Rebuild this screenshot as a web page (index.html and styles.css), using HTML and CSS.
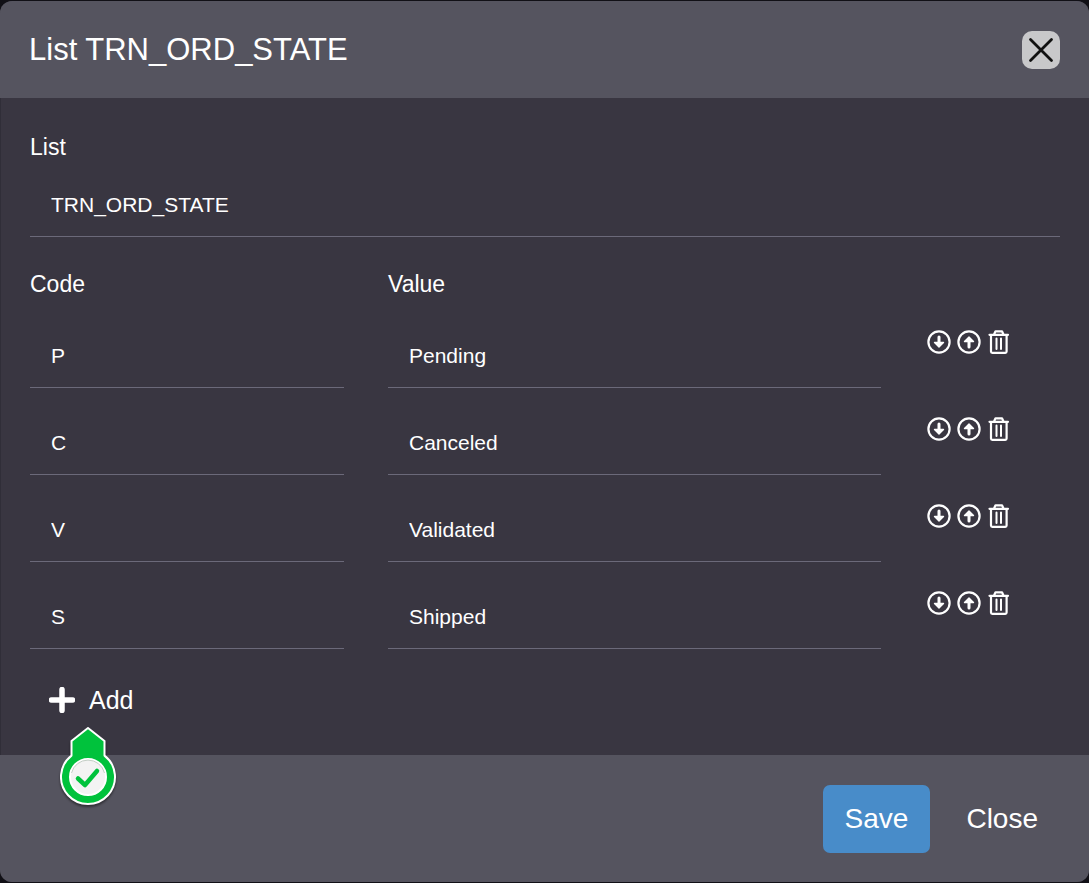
FILE: index.html
```html
<!DOCTYPE html>
<html lang="en">
<head>
<meta charset="utf-8">
<meta name="viewport" content="width=device-width, initial-scale=1">
<title>List TRN_ORD_STATE</title>
<link rel="stylesheet" href="styles.css">
</head>
<body>
<svg class="sprite" aria-hidden="true">
  <symbol id="down" viewBox="0 0 24 24">
    <circle cx="12" cy="12" r="10.6" fill="none" stroke="#fff" stroke-width="2.2"/>
    <path d="M12 7v7" fill="none" stroke="#fff" stroke-width="3" stroke-linecap="round"/>
    <path d="M7.500 12.500h9L12 17z" fill="#fff" stroke="#fff" stroke-width="1.400" stroke-linejoin="round"/>
  </symbol>
  <symbol id="up" viewBox="0 0 24 24">
    <circle cx="12" cy="12" r="10.6" fill="none" stroke="#fff" stroke-width="2.2"/>
    <path d="M12 17v-7" fill="none" stroke="#fff" stroke-width="3" stroke-linecap="round"/>
    <path d="M7.500 11.500h9L12 7z" fill="#fff" stroke="#fff" stroke-width="1.400" stroke-linejoin="round"/>
  </symbol>
  <symbol id="trash" viewBox="0 0 24 24">
    <g fill="none" stroke="#fff" stroke-width="2.200" stroke-linecap="round" stroke-linejoin="round">
      <path d="M2.500 4.800h18.500M7 4.500L8.500 1.300h6.500L16.500 4.500M4 5v16.500q0 1.300 1.300 1.300h13q1.300 0 1.300-1.300V5"/>
      <path d="M9.500 8.500v10.500M14 8.500v10.500" stroke-width="2"/>
    </g>
  </symbol>
</svg>
<main class="dialog" role="dialog" aria-labelledby="title">
  <header class="header">
    <h1 class="title" id="title">List TRN_ORD_STATE</h1>
    <button class="dismiss" type="button" aria-label="Dismiss">
      <svg viewBox="0 0 38 38" aria-hidden="true"><path d="M8.500 8.500l21 21M29.500 8.500l-21 21" fill="none" stroke="#111" stroke-width="2.800" stroke-linecap="round"/></svg>
    </button>
  </header>
  <form class="body">
    <label class="label" for="list">List</label>
    <input class="field list-field" id="list" type="text" value="TRN_ORD_STATE">
    <div class="columns headings">
      <span class="label" id="code">Code</span>
      <span class="label" id="value">Value</span>
    </div>
    <div class="rows">
      <div class="columns">
        <input class="field" type="text" aria-labelledby="code" value="P">
        <input class="field" type="text" aria-labelledby="value" value="Pending">
        <div class="actions">
          <button class="icon" type="button" aria-label="Move down"><svg><use href="#down"/></svg></button>
          <button class="icon" type="button" aria-label="Move up"><svg><use href="#up"/></svg></button>
          <button class="icon" type="button" aria-label="Delete"><svg><use href="#trash"/></svg></button>
        </div>
      </div>
      <div class="columns">
        <input class="field" type="text" aria-labelledby="code" value="C">
        <input class="field" type="text" aria-labelledby="value" value="Canceled">
        <div class="actions">
          <button class="icon" type="button" aria-label="Move down"><svg><use href="#down"/></svg></button>
          <button class="icon" type="button" aria-label="Move up"><svg><use href="#up"/></svg></button>
          <button class="icon" type="button" aria-label="Delete"><svg><use href="#trash"/></svg></button>
        </div>
      </div>
      <div class="columns">
        <input class="field" type="text" aria-labelledby="code" value="V">
        <input class="field" type="text" aria-labelledby="value" value="Validated">
        <div class="actions">
          <button class="icon" type="button" aria-label="Move down"><svg><use href="#down"/></svg></button>
          <button class="icon" type="button" aria-label="Move up"><svg><use href="#up"/></svg></button>
          <button class="icon" type="button" aria-label="Delete"><svg><use href="#trash"/></svg></button>
        </div>
      </div>
      <div class="columns">
        <input class="field" type="text" aria-labelledby="code" value="S">
        <input class="field" type="text" aria-labelledby="value" value="Shipped">
        <div class="actions">
          <button class="icon" type="button" aria-label="Move down"><svg><use href="#down"/></svg></button>
          <button class="icon" type="button" aria-label="Move up"><svg><use href="#up"/></svg></button>
          <button class="icon" type="button" aria-label="Delete"><svg><use href="#trash"/></svg></button>
        </div>
      </div>
    </div>
    <div class="add-wrap">
      <button class="add" type="button">
        <svg class="plus" viewBox="0 0 26 26" aria-hidden="true"><path d="M13 2.500v21M2.500 13h21" fill="none" stroke="#fff" stroke-width="5.500" stroke-linecap="round"/></svg>
        Add
      </button>
      <svg class="marker" viewBox="0 0 64 84" aria-hidden="true">
        <path d="M32 4L48.500 17V31.600A27 27 0 1 1 15.500 31.600V17z" fill="#00c23c" stroke="#fff" stroke-width="2" stroke-linejoin="round"/>
        <circle cx="32" cy="53" r="18" fill="#f3f3f3" stroke="#fff" stroke-width="2"/>
        <path d="M15.500 49a17 17 0 0 1 33 0" fill="none" stroke="#c4cfc6" stroke-width="1"/>
        <path d="M22 54.500l7 6.500L41 47" fill="none" stroke="#00c23c" stroke-width="4.500" stroke-linecap="round" stroke-linejoin="round"/>
      </svg>
    </div>
  </form>
  <footer class="footer">
    <button class="button primary" type="button">Save</button>
    <button class="button" type="button">Close</button>
  </footer>
</main>
</body>
</html>
```

FILE: styles.css
```css
* {
  box-sizing: border-box;
}

body {
  margin: 0;
  padding: 1px 0;
  background: #111016;
  color: #fff;
  font-family: "Liberation Sans", Arial, sans-serif;
}

button,
input {
  margin: 0;
  padding: 0;
  border: 0;
  background: none;
  color: inherit;
  font-family: inherit;
}

svg {
  display: block;
}

.sprite {
  position: absolute;
  width: 0;
  height: 0;
}

.dialog {
  display: flex;
  flex-direction: column;
  min-height: calc(100vh - 2px);
  overflow: hidden;
  border-radius: 12px;
  background: #393641;
}

.header {
  display: flex;
  align-items: center;
  justify-content: space-between;
  padding: 30px 29px 29px;
  background: #55545f;
}

.title {
  margin: 0;
  font-size: 31px;
  font-weight: 400;
  line-height: 38px;
}

.dismiss {
  width: 38px;
  height: 38px;
  border-radius: 10px;
  background: #c8c8ca;
}

.body {
  flex: 1;
  padding: 34px 29px;
  border-left: 1px solid #302e38;
}

.label {
  display: block;
  font-size: 23px;
  line-height: 30px;
}

.field {
  width: 100%;
  min-width: 0;
  height: 64px;
  padding: 0 21px;
  border-bottom: 1px solid #6b6979;
  border-radius: 0;
  font-size: 21px;
}

.list-field {
  display: block;
  margin-top: 11px;
}

.columns {
  display: grid;
  grid-template-columns: 314fr 493fr 135fr;
  column-gap: 44px;
}

.headings {
  margin: 32px 0 25px;
}

.rows {
  display: grid;
  row-gap: 23px;
}

.actions {
  display: flex;
  align-items: flex-start;
  gap: 6px;
  padding: 6px 2px;
}

.icon svg {
  width: 24px;
  height: 24px;
}

.add-wrap {
  position: relative;
  width: max-content;
  margin-top: 34px;
  padding-left: 19px;
}

.add {
  display: flex;
  align-items: center;
  gap: 14px;
  font-size: 25px;
  line-height: 34px;
}

.plus {
  width: 26px;
  height: 26px;
}

.marker {
  position: absolute;
  top: 41px;
  left: 26px;
  width: 64px;
  height: 84px;
  filter: drop-shadow(0 2px 1px rgb(0 0 0 / 45%));
}

.footer {
  display: flex;
  justify-content: flex-end;
  gap: 14px;
  padding: 30px 29px 29px;
  background: #55545f;
}

.button {
  height: 68px;
  padding: 0 22px;
  border-radius: 7px;
  font-size: 28px;
}

.primary {
  background: #488cc9;
}
```
